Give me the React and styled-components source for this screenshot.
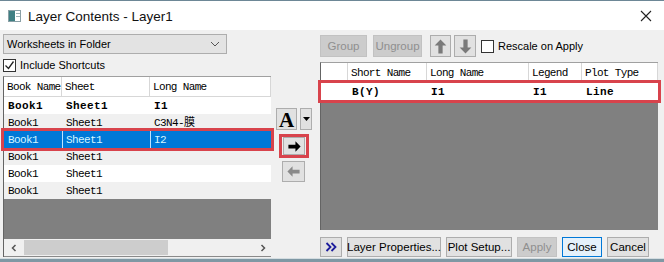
import styled, { createGlobalStyle } from "styled-components";

const GlobalStyle = createGlobalStyle`
  html, body {
    margin: 0;
    padding: 0;
    background: #7f98a4;
  }
  * {
    box-sizing: border-box;
  }
`;

const UI = `"Liberation Sans", Arial, sans-serif`;
const MONO = `"Liberation Mono", "Noto Sans CJK SC", monospace`;

const Window = styled.div`
  width: 664px;
  height: 259px;
  background: #f0f0f0;
  border-top: 1px solid #6d8796;
  border-bottom: 1px solid #d4dde1;
  display: flex;
  flex-direction: column;
  font-family: ${UI};
  font-size: 11px;
  color: #000;
`;

const TitleBar = styled.div`
  height: 29px;
  background: #fff;
  display: flex;
  align-items: center;
  padding: 0 12px 0 8px;
`;

const Title = styled.div`
  flex: 1;
  font-size: 13.5px;
  margin-left: 7px;
  margin-top: 2px;
  color: #111;
`;

const Body = styled.div`
  flex: 1;
  display: flex;
  padding: 0 6px 0 3px;
`;

const LeftPane = styled.div`
  width: 268px;
  display: flex;
  flex-direction: column;
`;

const Select = styled.div`
  margin-top: 4px;
  width: 224px;
  height: 20px;
  background: #e3e3e3;
  border: 1px solid #adadad;
  display: flex;
  align-items: center;
  justify-content: space-between;
  padding: 0 6px 0 3px;
`;

const CheckRow = styled.label`
  height: 22px;
  display: flex;
  align-items: center;
  gap: 4px;
  white-space: nowrap;
`;

const Box = styled.span`
  width: 13px;
  height: 13px;
  border: 1px solid #333;
  background: #fff;
  display: inline-flex;
  align-items: center;
  justify-content: center;
`;

const Grid = styled.div`
  height: ${(p) => p.$h}px;
  display: flex;
  flex-direction: column;
  border-top: 1px solid #a0a0a0;
  border-left: 1px solid #646464;
`;

const GridArea = styled.div`
  flex: 1;
  background: #808080;
  display: flex;
  flex-direction: column;
`;

const HeaderRow = styled.div`
  height: 20px;
  flex: none;
  display: grid;
  grid-template-columns: ${(p) => p.$cols};
  background: #fff;
  border-bottom: 1px solid #d7d7d7;
`;

const HeaderCell = styled.div`
  font-family: ${MONO};
  font-size: 11px;
  line-height: 14px;
  letter-spacing: -0.65px;
  padding: 3px 0 0 3px;
  border-right: 1px solid #d7d7d7;
  white-space: nowrap;
  overflow: hidden;
`;

const Row = styled.div`
  height: 17px;
  flex: none;
  display: grid;
  grid-template-columns: ${(p) => p.$cols};
  background: ${(p) => (p.$sel ? "#0078d7" : p.$alt ? "#f0f0f0" : "#fff")};
  color: ${(p) => (p.$sel ? "#d4f6ff" : "#000")};
  outline: ${(p) => (p.$mark ? "3px solid #d8434c" : "none")};
  position: relative;
  z-index: ${(p) => (p.$mark ? 1 : 0)};
`;

const Cell = styled.div`
  height: 17px;
  font-family: ${MONO};
  font-size: 11px;
  line-height: 14px;
  font-weight: ${(p) => (p.$bold ? 700 : 400)};
  letter-spacing: ${(p) => (p.$bold ? "0.4px" : "-0.6px")};
  padding: 2px 0 0 3px;
  white-space: nowrap;
  overflow: hidden;
  border-left: 1px solid ${(p) => (p.$sep ? "#bfe3ff" : "transparent")};
`;

const HScroll = styled.div`
  height: 18px;
  background: #f0f0f0;
  display: flex;
  align-items: center;
  padding: 0 4px 0 6px;
  border-bottom: 1px solid #8a8a8a;
`;

const Thumb = styled.div`
  width: 144px;
  height: 15px;
  background: #cdcdcd;
  margin-left: 6px;
`;

const Spacer = styled.div`
  flex: 1;
`;

const MiddlePane = styled.div`
  width: 49px;
  display: flex;
  flex-direction: column;
  padding-top: 78px;
`;

const FontRow = styled.div`
  display: flex;
  gap: 3px;
  padding-left: 5px;
`;

const Btn = styled.div`
  height: ${(p) => p.$h || 20}px;
  width: ${(p) => (p.$w ? `${p.$w}px` : "auto")};
  padding: ${(p) => (p.$w ? "0" : "0 5px")};
  display: inline-flex;
  align-items: center;
  justify-content: center;
  white-space: nowrap;
  background: ${(p) => (p.$off ? "#cccccc" : p.$def ? "#e5f1fb" : "#e1e1e1")};
  border: 1px solid ${(p) => (p.$off ? "#c2c2c2" : p.$def ? "#0078d7" : "#adadad")};
  color: ${(p) => (p.$off ? "#8f8f8f" : "#000")};
  font-family: ${UI};
  font-size: 11.5px;
`;

const BigA = styled.span`
  font-family: "Liberation Serif", serif;
  font-weight: 700;
  font-size: 21px;
  line-height: 1;
  margin-top: 2px;
`;

const MarkFrame = styled.div`
  margin: 4px 0 0 8px;
  width: 30px;
  height: 24px;
  border: 3px solid #d8434c;
  display: flex;
  align-items: center;
  justify-content: center;
  background: #f0f0f0;
`;

const BackBtn = styled(Btn)`
  margin: 3px 0 0 11px;
`;

const RightPane = styled.div`
  flex: 1;
  display: flex;
  flex-direction: column;
`;

const Toolbar = styled.div`
  margin-top: 5px;
  height: 22px;
  display: flex;
  align-items: center;
  gap: 5px;
`;

const ToolBtn = styled(Btn)`
  margin-left: ${(p) => p.$ml || 0}px;
`;

const RightGrid = styled(Grid)`
  margin-top: 5px;
`;

const ButtonRow = styled.div`
  margin-top: 7px;
  height: 20px;
  display: flex;
  gap: 5px;
`;

const Arrow = ({ dir, color, size = 16 }) => {
  const rot = { right: 0, down: 90, left: 180, up: 270 }[dir];
  return (
    <svg width={size} height={size} viewBox="0 0 16 16">
      <g transform={`rotate(${rot} 8 8)`}>
        <path d="M1.5 6h7.5V2.5l5.5 5.5-5.5 5.5V10H1.5z" fill={color} />
      </g>
    </svg>
  );
};

const leftCols = "58px 88px 1fr";
const rightCols = "27px 79px 102px 53px 1fr";

const leftRows = [
  { b: "Book1", s: "Sheet1", l: "I1", bold: true },
  { b: "Book1", s: "Sheet1", l: "C3N4-膜" },
  { b: "Book1", s: "Sheet1", l: "I2", sel: true },
  { b: "Book1", s: "Sheet1", l: "" },
  { b: "Book1", s: "Sheet1", l: "" },
  { b: "Book1", s: "Sheet1", l: "" },
];

export default function App() {
  return (
    <>
      <GlobalStyle />
      <Window>
        <TitleBar>
          <svg width="13" height="12" viewBox="0 0 13 12">
            <rect x="0.5" y="0.5" width="12" height="11" fill="#fff" stroke="#8aa0a6" />
            <rect x="1" y="1" width="6" height="10" fill="#3f7f83" />
            <rect x="8" y="3" width="4" height="1" fill="#9fb4b8" />
            <rect x="8" y="6" width="4" height="1" fill="#9fb4b8" />
          </svg>
          <Title>Layer Contents - Layer1</Title>
          <svg width="12" height="12" viewBox="0 0 12 12">
            <path d="M1 1l10 10M11 1L1 11" stroke="#222" strokeWidth="1.1" />
          </svg>
        </TitleBar>
        <Body>
          <LeftPane>
            <Select>
              <span>Worksheets in Folder</span>
              <svg width="10" height="6" viewBox="0 0 10 6">
                <path d="M1 1l4 4 4-4" fill="none" stroke="#555" strokeWidth="1" />
              </svg>
            </Select>
            <CheckRow>
              <Box>
                <svg width="11" height="11" viewBox="0 0 11 11">
                  <path d="M1.5 5.5l3 3 5-7" fill="none" stroke="#222" strokeWidth="1.3" />
                </svg>
              </Box>
              Include Shortcuts
            </CheckRow>
            <Grid $h={181}>
              <GridArea>
                <HeaderRow $cols={leftCols}>
                  <HeaderCell>Book Name</HeaderCell>
                  <HeaderCell>Sheet</HeaderCell>
                  <HeaderCell>Long Name</HeaderCell>
                </HeaderRow>
                {leftRows.map((r, i) => (
                  <Row key={i} $cols={leftCols} $alt={i % 2 === 1} $sel={r.sel} $mark={r.sel}>
                    <Cell $bold={r.bold}>{r.b}</Cell>
                    <Cell $bold={r.bold} $sep={r.sel}>{r.s}</Cell>
                    <Cell $bold={r.bold} $sep={r.sel}>{r.l}</Cell>
                  </Row>
                ))}
              </GridArea>
              <HScroll>
                <svg width="8" height="8" viewBox="0 0 8 8">
                  <path d="M5.5 1L2.5 4l3 3" fill="none" stroke="#555" strokeWidth="1.5" />
                </svg>
                <Thumb />
                <Spacer />
                <svg width="8" height="8" viewBox="0 0 8 8">
                  <path d="M2.5 1l3 3-3 3" fill="none" stroke="#555" strokeWidth="1.5" />
                </svg>
              </HScroll>
            </Grid>
          </LeftPane>

          <MiddlePane>
            <FontRow>
              <Btn $w={21} $h={22}>
                <BigA>A</BigA>
              </Btn>
              <Btn $w={12} $h={22}>
                <svg width="7" height="4" viewBox="0 0 7 4">
                  <path d="M0 0h7L3.5 4z" fill="#000" />
                </svg>
              </Btn>
            </FontRow>
            <MarkFrame>
              <Btn $w={22} $h={18}>
                <Arrow dir="right" color="#000" size={15} />
              </Btn>
            </MarkFrame>
            <BackBtn $w={23} $h={21}>
              <Arrow dir="left" color="#8a8a8a" size={15} />
            </BackBtn>
          </MiddlePane>

          <RightPane>
            <Toolbar>
              <ToolBtn $off $w={47} $h={22}>Group</ToolBtn>
              <ToolBtn $off $w={49} $h={22} $ml={1}>Ungroup</ToolBtn>
              <ToolBtn $w={21} $h={22} $ml={3}>
                <Arrow dir="up" color="#7a7a7a" size={17} />
              </ToolBtn>
              <ToolBtn $w={22} $h={22} $ml={-2}>
                <Arrow dir="down" color="#7a7a7a" size={17} />
              </ToolBtn>
              <CheckRow>
                <Box />
                Rescale on Apply
              </CheckRow>
            </Toolbar>
            <RightGrid $h={168}>
              <GridArea>
                <HeaderRow $cols={rightCols}>
                  <HeaderCell />
                  <HeaderCell>Short Name</HeaderCell>
                  <HeaderCell>Long Name</HeaderCell>
                  <HeaderCell>Legend</HeaderCell>
                  <HeaderCell>Plot Type</HeaderCell>
                </HeaderRow>
                <Row $cols={rightCols} $mark>
                  <Cell />
                  <Cell $bold>B(Y)</Cell>
                  <Cell $bold>I1</Cell>
                  <Cell $bold>I1</Cell>
                  <Cell $bold>Line</Cell>
                </Row>
              </GridArea>
            </RightGrid>
            <ButtonRow>
              <Btn $w={22}>
                <svg width="12" height="10" viewBox="0 0 12 10">
                  <path d="M1.5 1l4 4-4 4M6.5 1l4 4-4 4" fill="none" stroke="#1c1c9c" strokeWidth="1.8" />
                </svg>
              </Btn>
              <Btn $w={94}>Layer Properties...</Btn>
              <Btn $w={66}>Plot Setup...</Btn>
              <Btn $off $w={40}>Apply</Btn>
              <Btn $def $w={40}>Close</Btn>
              <Btn $w={42}>Cancel</Btn>
            </ButtonRow>
          </RightPane>
        </Body>
      </Window>
    </>
  );
}
